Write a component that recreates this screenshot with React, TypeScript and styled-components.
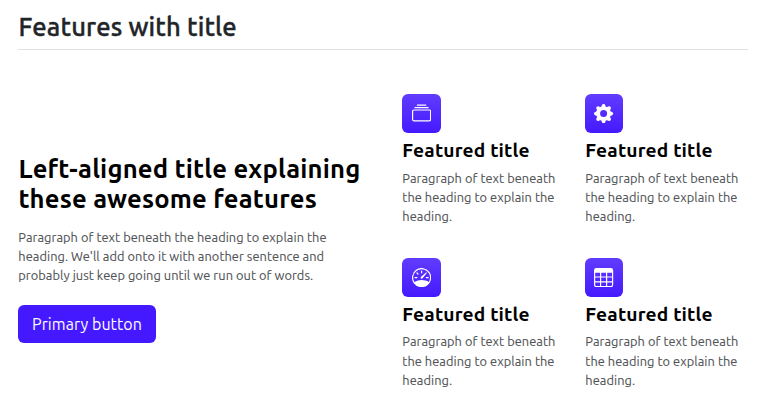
import React from 'react';
import styled, { createGlobalStyle } from 'styled-components';
import { BsCollection, BsGearFill, BsSpeedometer, BsTable } from 'react-icons/bs';
import type { IconType } from 'react-icons';

const GlobalStyle = createGlobalStyle`
  * { box-sizing: border-box; }
  body {
    margin: 0;
    background: #fff;
    color: #212529;
    font-family: Ubuntu, "Noto Sans", sans-serif;
    font-size: 12.8px;
    line-height: 19.2px;
    overflow: hidden;
  }
  h2, h3, h4, p { margin: 0; }
`;

const Page = styled.main`
  width: 730px;
  margin-left: 18px;
`;

const PageTitle = styled.h2`
  height: 50px;
  padding-top: 11.5px;
  padding-left: 0.4px;
  border-bottom: 1px solid #dee2e6;
  font-size: 25.6px;
  line-height: 30.7px;
  font-weight: 500;
  letter-spacing: 0.15px;
  -webkit-text-stroke: 0.4px currentColor;
`;

const Content = styled.section`
  display: grid;
  grid-template-columns: 352px 346px;
  column-gap: 32px;
  padding-top: 44px;
`;

const Intro = styled.div`
  display: flex;
  flex-direction: column;
  align-items: flex-start;
  padding-top: 60px;
`;

const IntroTitle = styled.h3`
  padding-left: 0.4px;
  color: #000;
  font-size: 25.6px;
  line-height: 30px;
  font-weight: 700;
  letter-spacing: 0.19px;
  white-space: nowrap;
`;

const Copy = styled.p`
  padding-left: 0.3px;
  color: #505356;
  letter-spacing: 0.06px;
  white-space: nowrap;
  -webkit-text-stroke: 0.1px currentColor;
`;

const IntroCopy = styled(Copy)`
  margin: 14px 0 19px;
`;

const Button = styled.button`
  width: 138px;
  height: 38px;
  padding: 0;
  border: 0;
  border-radius: 6px;
  background: #4519ff;
  color: #fff;
  font: 400 16px/24px Ubuntu, "Noto Sans", sans-serif;
  letter-spacing: 0.08px;
`;

const Features = styled.div`
  display: grid;
  grid-template-columns: 151px 163px;
  column-gap: 32px;
  row-gap: 31.6px;
`;

const Feature = styled.article`
  display: flex;
  flex-direction: column;
  align-items: flex-start;
  gap: 6.4px;
  min-width: 0;
`;

const IconTile = styled.div<{ $width: number }>`
  display: grid;
  place-items: center;
  width: ${(p) => p.$width}px;
  height: 39px;
  border-radius: 6px;
  background: linear-gradient(#613cff, #4519ff);
  color: #fff;
  font-size: 19.2px;
  svg { display: block; }
`;

const FeatureTitle = styled.h4`
  margin-bottom: 0.4px;
  padding-left: 0.3px;
  color: #000;
  font-size: 19.2px;
  line-height: 22.4px;
  font-weight: 700;
  letter-spacing: 0.16px;
  white-space: nowrap;
`;

const features: { Icon: IconType; width: number }[] = [
  { Icon: BsCollection, width: 39 },
  { Icon: BsGearFill, width: 38 },
  { Icon: BsSpeedometer, width: 39 },
  { Icon: BsTable, width: 38 },
];

export default function App() {
  return (
    <>
      <GlobalStyle />
      <Page>
        <PageTitle>Features with title</PageTitle>
        <Content>
          <Intro>
            <IntroTitle>
              Left-aligned title explaining<br />these awesome features
            </IntroTitle>
            <IntroCopy>
              Paragraph of text beneath the heading to explain the<br />
              heading. We'll add onto it with another sentence and<br />
              probably just keep going until we run out of words.
            </IntroCopy>
            <Button>Primary button</Button>
          </Intro>
          <Features>
            {features.map(({ Icon, width }, i) => (
              <Feature key={i}>
                <IconTile $width={width}><Icon /></IconTile>
                <FeatureTitle>Featured title</FeatureTitle>
                <Copy>
                  Paragraph of text beneath<br />the heading to explain the<br />heading.
                </Copy>
              </Feature>
            ))}
          </Features>
        </Content>
      </Page>
    </>
  );
}
